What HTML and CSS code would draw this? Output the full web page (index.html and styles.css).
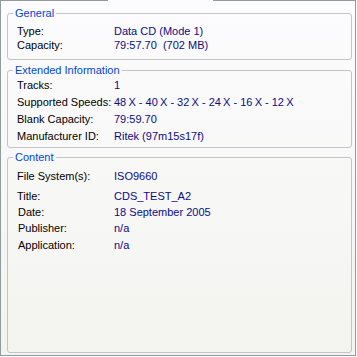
FILE: index.html
```html
<!DOCTYPE html>
<html lang="en">
<head>
    <meta charset="UTF-8">
    <title>Disc Information</title>
    <link rel="stylesheet" href="styles.css">
</head>
<body>
    <div class="pane">
        <div class="tab-edge">
            <div class="edge-left"></div>
            <div class="edge-gap"></div>
            <div class="edge-right"></div>
        </div>
        <div class="panel">
            <fieldset class="group group-general">
                <legend>General</legend>
                <div class="row"><span class="label">Type:</span><span class="value">Data CD (Mode 1)</span></div>
                <div class="row"><span class="label">Capacity:</span><span class="value">79:57.70&nbsp; (702 MB)</span></div>
            </fieldset>

            <fieldset class="group group-extended">
                <legend>Extended Information</legend>
                <div class="row"><span class="label">Tracks:</span><span class="value">1</span></div>
                <div class="row"><span class="label">Supported Speeds:</span><span class="value">48&#8201;X - 40&#8201;X - 32&#8201;X - 24&#8201;X - 16&#8201;X - 12&#8201;X</span></div>
                <div class="row"><span class="label">Blank Capacity:</span><span class="value">79:59.70</span></div>
                <div class="row"><span class="label">Manufacturer ID:</span><span class="value">Ritek (97m15s17f)</span></div>
            </fieldset>

            <fieldset class="group group-content">
                <legend>Content</legend>
                <div class="row row-fs"><span class="label">File System(s):</span><span class="value">ISO9660</span></div>
                <div class="row row-title"><span class="label">Title:</span><span class="value">CDS_TEST_A2</span></div>
                <div class="row row-date"><span class="label indent">Date:</span><span class="value">18 September 2005</span></div>
                <div class="row row-pub"><span class="label indent">Publisher:</span><span class="value">n/a</span></div>
                <div class="row row-app"><span class="label indent">Application:</span><span class="value">n/a</span></div>
            </fieldset>
        </div>
    </div>
</body>
</html>
```

FILE: styles.css
```css
body {
    margin: 0;
    background-color: #ffffff;
    font-family: "Liberation Sans", Arial, sans-serif;
    font-size: 11px;
    line-height: 13px;
    color: #000000;
}
.pane {
    width: 356px;
    height: 356px;
    display: flex;
    flex-direction: column;
}
.tab-edge {
    display: flex;
    height: 1px;
    flex: none;
}
.edge-left {
    width: 108px;
    background-color: #919b9c;
}
.edge-gap {
    width: 105px;
    background-color: #fcfcfe;
}
.edge-right {
    flex: 1;
    background-color: #919b9c;
}
.panel {
    flex: 1;
    display: flex;
    flex-direction: column;
    border: 1px solid #919b9c;
    border-top: none;
    padding: 6px 3px 2px 6px;
    background: linear-gradient(#fcfcfe, #f3f3ef);
}
.group {
    margin: 0;
    padding: 0 0 0 9px;
    border: 1px solid #c4c4c8;
    border-radius: 3px;
}
.group legend {
    margin-left: -4px;
    padding: 0 2px;
    color: #0046d5;
    line-height: 13px;
}
.row {
    display: flex;
    align-items: center;
    height: 17px;
}
.label {
    width: 97px;
    flex: none;
}
.label.indent {
    padding-left: 1px;
    width: 96px;
}
.value {
    color: #0b0b84;
    white-space: nowrap;
}
.group-general {
    padding-top: 4px;
    padding-bottom: 7px;
}
.group-general .row {
    height: 14px;
}
.group-extended {
    margin-top: 4px;
    padding-bottom: 2px;
}
.group-content {
    margin-top: 3px;
    padding-top: 4px;
    flex: 1;
}
.row-fs {
    margin-bottom: 4px;
}
.row-title {
    height: 15px;
}
.row-date,
.row-app {
    height: 16px;
}
```
